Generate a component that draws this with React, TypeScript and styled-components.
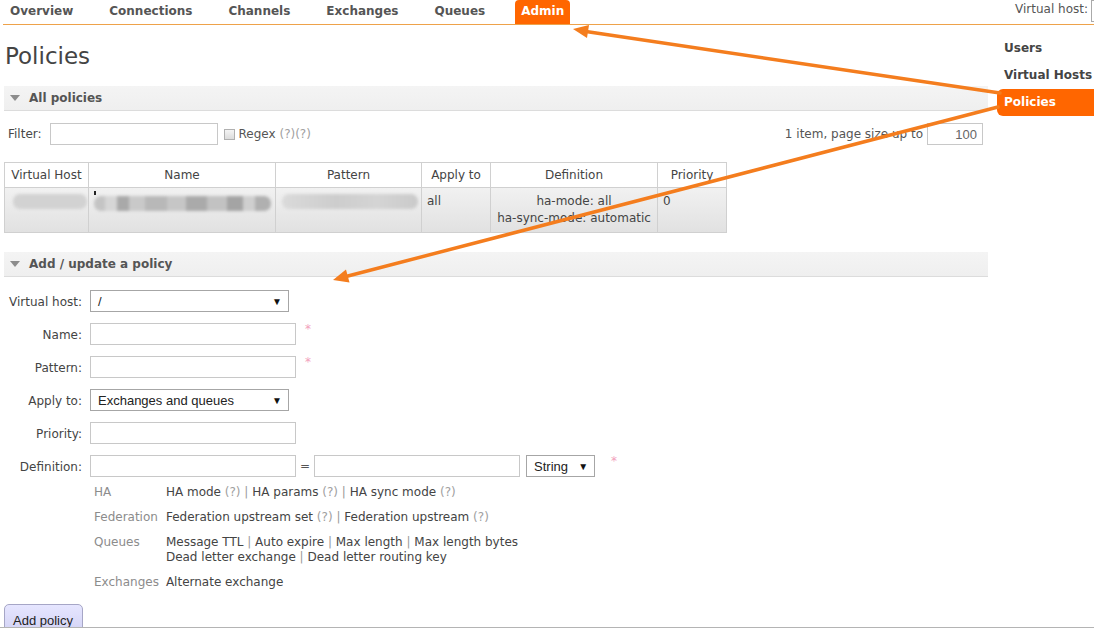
import React from 'react';
import styled, { createGlobalStyle } from 'styled-components';

const Global = createGlobalStyle`
  html, body { margin: 0; padding: 0; background: #fff; }
  body { font-family: "DejaVu Sans", Verdana, sans-serif; font-size: 12px; color: #484848; }
  * { box-sizing: border-box; }
`;

const Page = styled.div`
  position: relative;
  width: 1094px;
  height: 628px;
  overflow: hidden;
  border-bottom: 1px solid #b4b4b4;
`;

const Header = styled.div`
  display: flex;
  align-items: flex-end;
  height: 25px;
  margin-left: 3px;
  border-bottom: 1px solid #eea24a;
`;

const Nav = styled.ul`
  display: flex;
  gap: 24px;
  list-style: none;
  margin: 0;
  padding: 0 0 0 1px;
`;

const NavItem = styled.li<{ $active?: boolean }>`
  height: 24px;
  line-height: 22px;
  padding: 0 6px;
  font-weight: bold;
  color: ${(p) => (p.$active ? '#fff' : '#555')};
  background: ${(p) => (p.$active ? '#ff6600' : 'transparent')};
  border-radius: 4px 4px 0 0;
`;

const VHost = styled.div`
  margin-left: auto;
  margin-right: -37px;
  align-self: flex-start;
  display: flex;
  gap: 3px;
  height: 22px;
  line-height: 19px;
  color: #555;
  white-space: nowrap;
`;

const VHostBox = styled.div`
  width: 40px;
  height: 22px;
  border: 1px solid #aaa;
  flex: none;
`;

const Main = styled.div`
  display: flex;
`;

const Content = styled.div`
  width: 984px;
  margin-left: 4px;
  flex: none;
`;

const Title = styled.h1`
  margin: 0;
  padding: 16px 0 0 1px;
  font-size: 23px;
  line-height: 30px;
  font-weight: normal;
  color: #444;
`;

const SectionHead = styled.div<{ $top: number }>`
  display: flex;
  align-items: center;
  gap: 9px;
  margin-top: ${(p) => p.$top}px;
  height: 25px;
  padding-left: 6px;
  background: linear-gradient(#f4f4f4, #efefef);
  border-bottom: 1px solid #dcdcdc;
  font-weight: bold;
  color: #555;
`;

const Caret = styled.span`
  width: 0;
  height: 0;
  border-left: 5px solid transparent;
  border-right: 5px solid transparent;
  border-top: 6px solid #8c8c8c;
`;

const FilterRow = styled.div`
  display: flex;
  align-items: center;
  margin-top: 12px;
  height: 22px;
  padding: 0 5px 0 4px;
`;

const TextInput = styled.input<{ $w: number; $align?: string }>`
  width: ${(p) => p.$w}px;
  height: 22px;
  border: 1px solid #c8c8c8;
  padding: 0 5px;
  font-family: "Liberation Sans", Arial, sans-serif;
  font-size: 13px;
  color: #666;
  text-align: ${(p) => p.$align || 'left'};
  background: #fff;
  flex: none;
`;

const FilterInput = styled(TextInput)`
  margin-left: 8px;
`;

const Check = styled.span`
  width: 11px;
  height: 11px;
  margin-left: 6px;
  border: 1px solid #b0b0b0;
  background: linear-gradient(#f4f4f4, #dcdcdc);
  flex: none;
`;

const Muted = styled.span`
  color: #a0a0a0;
`;

const RegexLabel = styled.span`
  margin-left: 4px;
  color: #555;
`;

const Paging = styled.div`
  margin-left: auto;
  display: flex;
  align-items: center;
  gap: 4px;
  color: #555;
`;

const Table = styled.table`
  margin-top: 17px;
  border-collapse: collapse;
  border: 1px solid #c8c8c8;
  table-layout: fixed;
  width: 723px;
`;

const Th = styled.th<{ $w: number }>`
  width: ${(p) => p.$w}px;
  height: 25px;
  padding: 0 4px;
  font-weight: normal;
  text-align: center;
  border: 1px solid #d0d0d0;
  color: #444;
  background: #fff;
  white-space: nowrap;
`;

const Row = styled.tr`
  background: linear-gradient(#f1f1f1, #e1e1e1);
`;

const Td = styled.td<{ $center?: boolean }>`
  height: 45px;
  padding: 5px 5px 3px;
  vertical-align: top;
  line-height: 17px;
  border: 1px solid #d0d0d0;
  text-align: ${(p) => (p.$center ? 'center' : 'left')};
  color: #444;
  white-space: nowrap;
`;

const Blur = styled.div<{ $w: number; $bg: string; $ml: number }>`
  width: ${(p) => p.$w}px;
  height: 15px;
  margin: 1px 0 0 ${(p) => p.$ml}px;
  border-radius: 7px;
  background: ${(p) => p.$bg};
  filter: blur(1.4px);
`;

const Tick = styled.div`
  width: 2px;
  height: 4px;
  margin: -2px 0 0 0;
  background: #222;
`;

const Form = styled.div`
  display: grid;
  grid-template-columns: 78px auto;
  column-gap: 8px;
  row-gap: 11px;
  margin-top: 13px;
  align-items: center;
`;

const Label = styled.label`
  text-align: right;
  color: #444;
  white-space: nowrap;
  padding-top: 1px;
`;

const Field = styled.div`
  display: flex;
  align-items: center;
  height: 22px;
`;

const SelectBox = styled.div<{ $w: number; $ml?: number }>`
  display: flex;
  align-items: center;
  justify-content: space-between;
  width: ${(p) => p.$w}px;
  height: 22px;
  margin-left: ${(p) => p.$ml || 0}px;
  padding: 0 6px 0 7px;
  border: 1px solid #a6a6a6;
  background: #fff;
  font-family: "Liberation Sans", Arial, sans-serif;
  font-size: 13px;
  color: #222;
  flex: none;
`;

const Arrow = styled.span`
  font-size: 10px;
  color: #111;
`;

const Star = styled.span<{ $ml: number }>`
  margin-left: ${(p) => p.$ml}px;
  align-self: flex-start;
  margin-top: -1px;
  color: #f2a0bc;
  font-size: 12px;
`;

const Equals = styled.span`
  margin: 0 4px 0 4px;
  color: #555;
`;

const Help = styled.table`
  margin: 3px 0 0 86px;
  border-collapse: collapse;
`;

const HelpKey = styled.td`
  width: 72px;
  padding: 5px 4px;
  line-height: 15px;
  color: #8c8c8c;
  vertical-align: top;
  white-space: nowrap;
`;

const HelpVal = styled.td`
  padding: 5px 3px;
  line-height: 15px;
  color: #444;
  vertical-align: top;
  white-space: nowrap;
`;

const Sep = styled.span`
  color: #999;
`;

const Button = styled.button`
  display: block;
  margin-top: 9px;
  padding: 8px 8px;
  width: 79px;
  line-height: 16px;
  font-family: "Liberation Sans", Arial, sans-serif;
  font-size: 13px;
  color: #222;
  background: linear-gradient(#e6e6ff, #cfcff2);
  border: 1px solid #a6a6c6;
  border-radius: 5px;
  text-align: left;
`;

const Side = styled.ul`
  list-style: none;
  margin: 10px 0 0 9px;
  padding: 0;
  width: 97px;
  flex: none;
`;

const SideItem = styled.li<{ $active?: boolean }>`
  height: 27px;
  line-height: 27px;
  padding-left: 7px;
  font-weight: bold;
  white-space: nowrap;
  color: ${(p) => (p.$active ? '#fff' : '#444')};
  background: ${(p) => (p.$active ? '#ff6600' : 'transparent')};
  border-radius: 6px 0 0 6px;
`;

const Overlay = styled.svg`
  position: absolute;
  left: 0;
  top: 0;
  pointer-events: none;
`;

const Q = () => <Muted>(?)</Muted>;

export default function App() {
  const nameBg =
    'linear-gradient(90deg, #c4c4c4 0 6%, #d6d6d6 6% 13%, #a9a9a9 13% 20%, #c9c9c9 20% 29%, #b8b8b8 29% 41%, #c6c6c6 41% 52%, #aaaaaa 52% 64%, #c2c2c2 64% 75%, #a4a4a4 75% 84%, #cfcfcf 84% 91%, #b0b0b0 91% 100%)';
  return (
    <Page>
      <Global />
      <Header>
        <Nav>
          <NavItem>Overview</NavItem>
          <NavItem>Connections</NavItem>
          <NavItem>Channels</NavItem>
          <NavItem>Exchanges</NavItem>
          <NavItem>Queues</NavItem>
          <NavItem $active>Admin</NavItem>
        </Nav>
        <VHost>
          <span>Virtual host:</span>
          <VHostBox />
        </VHost>
      </Header>
      <Main>
        <Content>
          <Title>Policies</Title>
          <SectionHead $top={15}>
            <Caret />
            All policies
          </SectionHead>
          <FilterRow>
            <span>Filter:</span>
            <FilterInput $w={168} />
            <Check />
            <RegexLabel>
              Regex <Q />
              <Q />
            </RegexLabel>
            <Paging>
              <span>1 item, page size up to</span>
              <TextInput $w={56} $align="right" defaultValue="100" />
            </Paging>
          </FilterRow>
          <Table>
            <thead>
              <tr>
                <Th $w={84}>Virtual Host</Th>
                <Th $w={187}>Name</Th>
                <Th $w={146}>Pattern</Th>
                <Th $w={69}>Apply to</Th>
                <Th $w={167}>Definition</Th>
                <Th $w={69}>Priority</Th>
              </tr>
            </thead>
            <tbody>
              <Row>
                <Td>
                  <Blur $w={74} $ml={3} $bg="#d2d2d2" />
                </Td>
                <Td>
                  <Tick />
                  <Blur $w={177} $ml={0} $bg={nameBg} />
                </Td>
                <Td>
                  <Blur $w={136} $ml={1} $bg="linear-gradient(90deg,#dadada,#cdcdcd 40%,#d4d4d4 70%,#cacaca)" />
                </Td>
                <Td>all</Td>
                <Td $center>
                  ha-mode: all
                  <br />
                  ha-sync-mode: automatic
                </Td>
                <Td>0</Td>
              </Row>
            </tbody>
          </Table>
          <SectionHead $top={19}>
            <Caret />
            Add / update a policy
          </SectionHead>
          <Form>
            <Label>Virtual host:</Label>
            <Field>
              <SelectBox $w={199}>
                <span>/</span>
                <Arrow>▼</Arrow>
              </SelectBox>
            </Field>
            <Label>Name:</Label>
            <Field>
              <TextInput $w={206} />
              <Star $ml={9}>*</Star>
            </Field>
            <Label>Pattern:</Label>
            <Field>
              <TextInput $w={206} />
              <Star $ml={9}>*</Star>
            </Field>
            <Label>Apply to:</Label>
            <Field>
              <SelectBox $w={199}>
                <span>Exchanges and queues</span>
                <Arrow>▼</Arrow>
              </SelectBox>
            </Field>
            <Label>Priority:</Label>
            <Field>
              <TextInput $w={206} />
            </Field>
            <Label>Definition:</Label>
            <Field>
              <TextInput $w={206} />
              <Equals>=</Equals>
              <TextInput $w={206} />
              <SelectBox $w={69} $ml={6}>
                <span>String</span>
                <Arrow>▼</Arrow>
              </SelectBox>
              <Star $ml={16}>*</Star>
            </Field>
          </Form>
          <Help>
            <tbody>
              <tr>
                <HelpKey>HA</HelpKey>
                <HelpVal>
                  HA mode <Q /> <Sep>|</Sep> HA params <Q /> <Sep>|</Sep> HA sync mode <Q />
                </HelpVal>
              </tr>
              <tr>
                <HelpKey>Federation</HelpKey>
                <HelpVal>
                  Federation upstream set <Q /> <Sep>|</Sep> Federation upstream <Q />
                </HelpVal>
              </tr>
              <tr>
                <HelpKey>Queues</HelpKey>
                <HelpVal>
                  Message TTL <Sep>|</Sep> Auto expire <Sep>|</Sep> Max length <Sep>|</Sep> Max length bytes
                  <br />
                  Dead letter exchange <Sep>|</Sep> Dead letter routing key
                </HelpVal>
              </tr>
              <tr>
                <HelpKey>Exchanges</HelpKey>
                <HelpVal>Alternate exchange</HelpVal>
              </tr>
            </tbody>
          </Help>
          <Button>Add policy</Button>
        </Content>
        <Side>
          <SideItem>Users</SideItem>
          <SideItem>Virtual Hosts</SideItem>
          <SideItem $active>Policies</SideItem>
        </Side>
      </Main>
      <Overlay width="1094" height="628" viewBox="0 0 1094 628">
        <g stroke="#f47d1e" strokeWidth="3.5" strokeLinecap="round" fill="#f47d1e">
          <line x1="1000" y1="93" x2="586" y2="31.5" />
          <polygon points="573,29 589,25 587,38" stroke="none" />
          <line x1="998" y1="107" x2="346" y2="276.5" />
          <polygon points="333,280 346,269.5 349.5,282.5" stroke="none" />
        </g>
      </Overlay>
    </Page>
  );
}
